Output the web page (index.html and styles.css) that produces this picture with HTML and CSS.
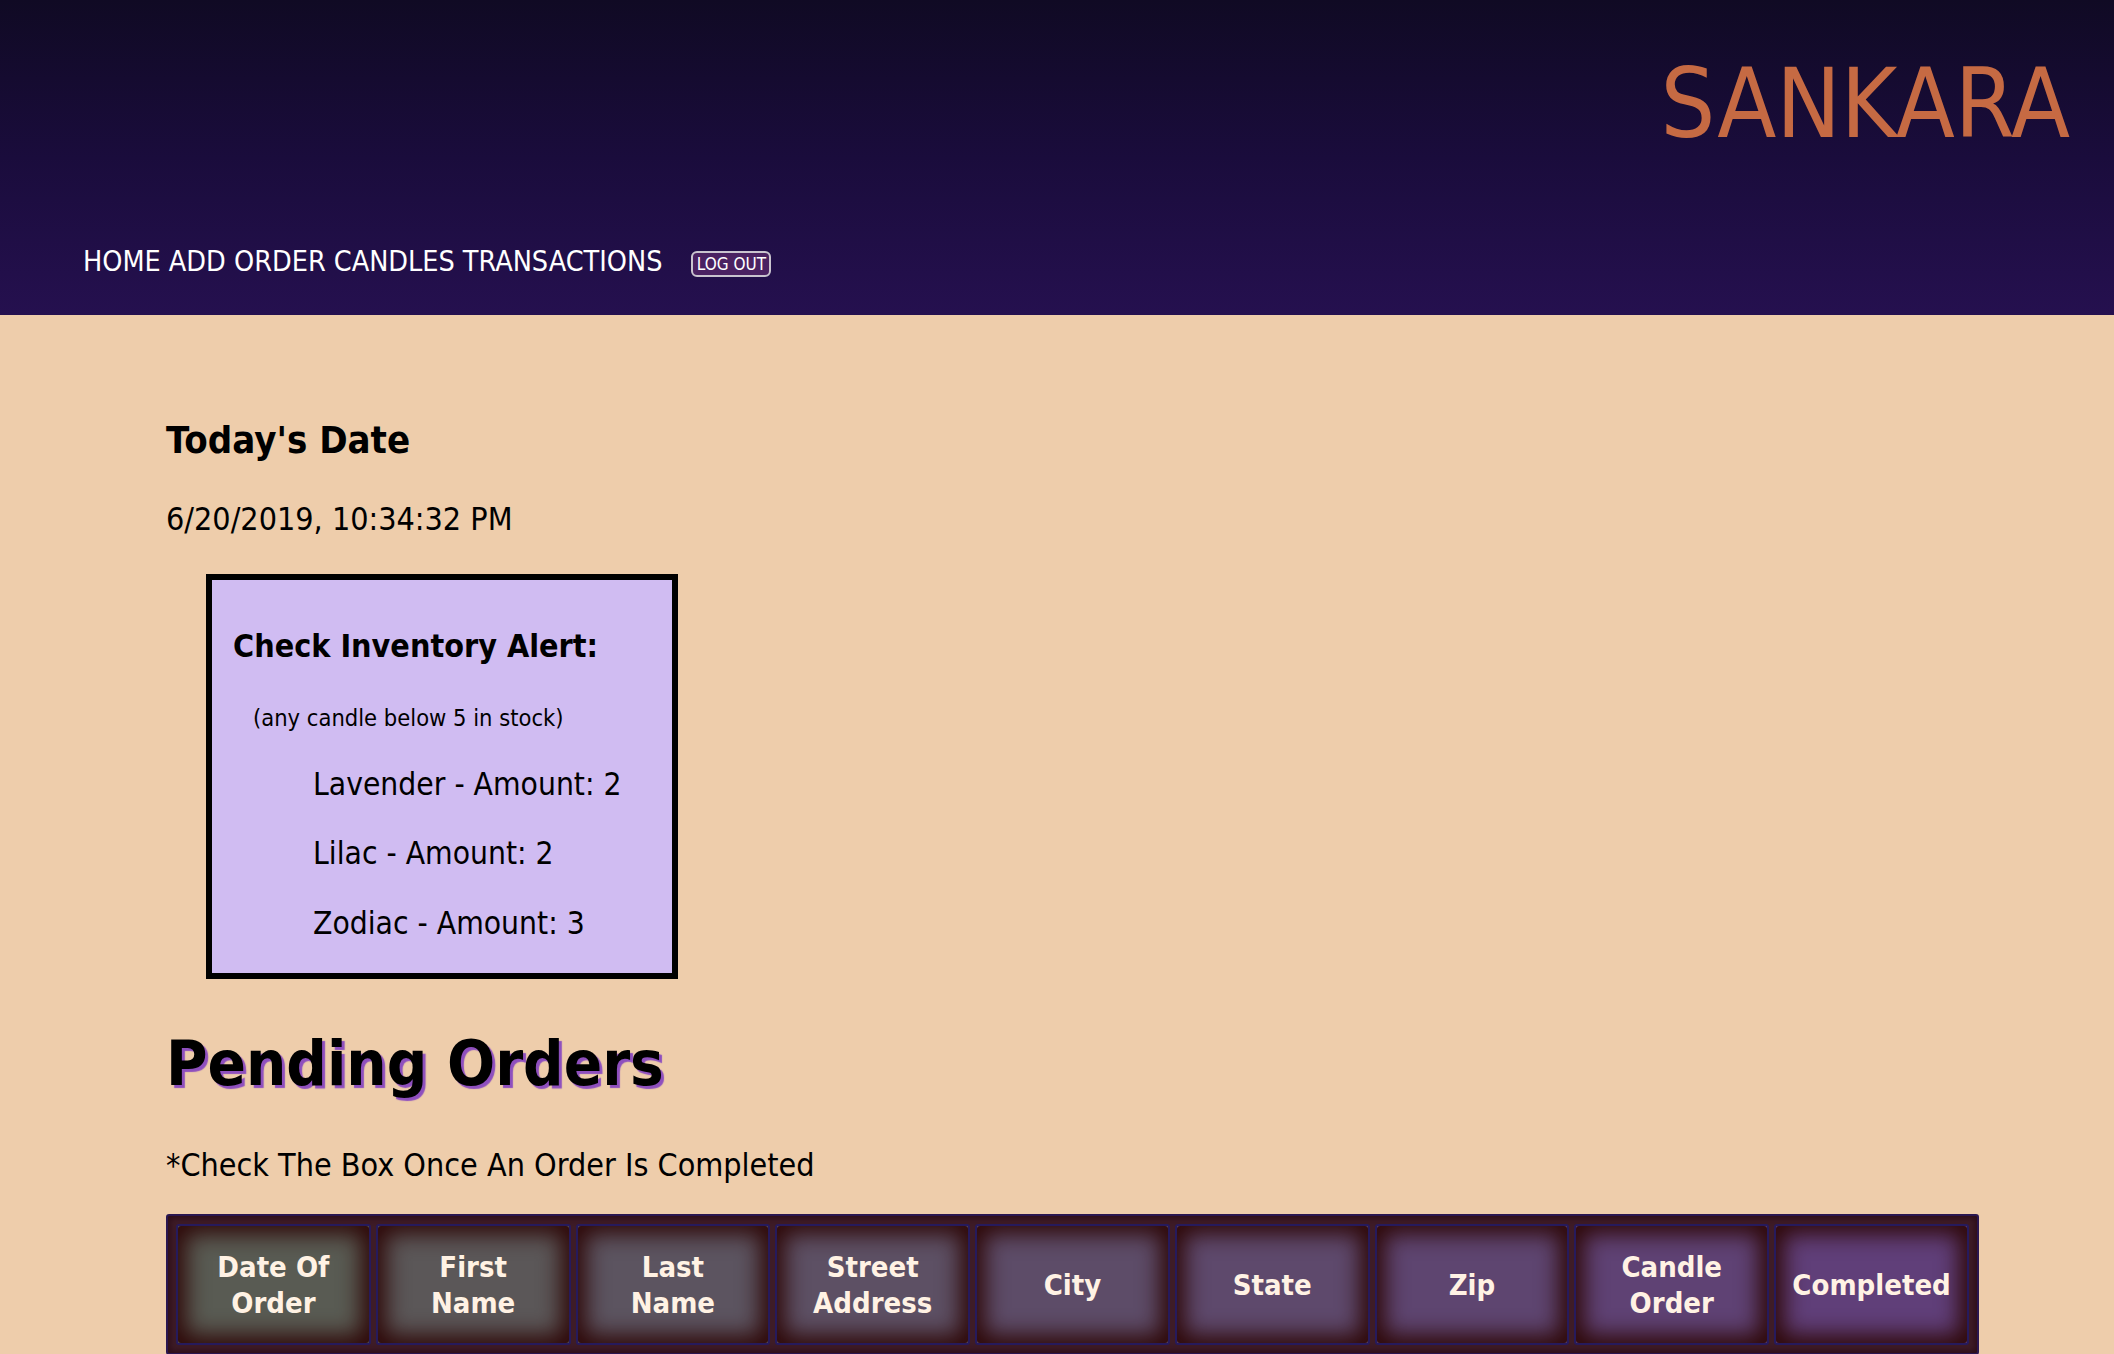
FILE: index.html
```html
<!DOCTYPE html>
<html lang="en">
<head>
<meta charset="utf-8">
<title>Sankara</title>
<link rel="stylesheet" href="styles.css">
</head>
<body>
<header class="site-header">
  <div class="brand">SANKARA</div>
  <nav class="nav">
    <a class="nav-link" href="#">HOME</a>
    <a class="nav-link" href="#">ADD ORDER</a>
    <a class="nav-link" href="#">CANDLES</a>
    <a class="nav-link" href="#">TRANSACTIONS</a>
    <button class="logout" type="button">LOG OUT</button>
  </nav>
</header>
<main class="main">
  <h3 class="date-title">Today's Date</h3>
  <p class="date-value">6/20/2019, 10:34:32 PM</p>
  <section class="alert">
    <h4 class="alert-title">Check Inventory Alert:</h4>
    <p class="alert-sub">(any candle below 5 in stock)</p>
    <p class="alert-item">Lavender - Amount: 2</p>
    <p class="alert-item">Lilac - Amount: 2</p>
    <p class="alert-item">Zodiac - Amount: 3</p>
  </section>
  <h1 class="pending-title">Pending Orders</h1>
  <p class="note">*Check The Box Once An Order Is Completed</p>
  <table class="orders">
    <thead>
      <tr>
        <th class="col c1">Date Of<br>Order</th>
        <th class="col c2">First<br>Name</th>
        <th class="col c3">Last<br>Name</th>
        <th class="col c4">Street<br>Address</th>
        <th class="col c5">City</th>
        <th class="col c6">State</th>
        <th class="col c7">Zip</th>
        <th class="col c8">Candle<br>Order</th>
        <th class="col c9">Completed</th>
      </tr>
    </thead>
  </table>
</main>
</body>
</html>
```
FILE: styles.css
```css
html, body {
  margin: 0;
  padding: 0;
}
body {
  background: #eecdab;
  font-family: "DejaVu Sans Condensed", "DejaVu Sans", Verdana, sans-serif;
  font-stretch: condensed;
  color: #000;
}
.site-header {
  height: 315px;
  box-sizing: border-box;
  background: linear-gradient(to bottom, #100a24 0%, #1a0c3c 50%, #25104f 100%);
  padding-top: 56px;
  display: flex;
  flex-direction: column;
}
.brand {
  align-self: flex-end;
  margin-right: 44px;
  color: #c66a43;
  font-size: 96px;
  line-height: 1;
  height: 96px;
}
.nav {
  margin-top: 96px;
  margin-left: 83px;
  display: flex;
  align-items: center;
  gap: 8px;
  height: 28px;
}
.nav-link {
  color: #fff;
  text-decoration: none;
  font-size: 28.5px;
  line-height: 1;
}
.logout {
  margin-left: 21px;
  margin-top: 4px;
  height: 26px;
  width: 80px;
  padding: 0;
  box-sizing: border-box;
  border: 2px solid #c9c4cf;
  border-radius: 6px;
  background: #4a2262;
  color: #fff;
  font-family: "DejaVu Sans Condensed", "DejaVu Sans", sans-serif;
  font-stretch: condensed;
  font-size: 17px;
  line-height: 1;
}
.main {
  padding-left: 166px;
  padding-top: 106px;
  padding-bottom: 40px;
}
.date-title {
  margin: 0;
  font-size: 38px;
  line-height: 1;
  font-weight: bold;
}
.date-value {
  margin: 44px 0 0;
  font-size: 32px;
  line-height: 1;
}
.alert {
  margin: 39px 0 0 40px;
  width: 472px;
  height: 405px;
  box-sizing: border-box;
  border: 6px solid #000;
  background: #d0bcf2;
  padding: 50px 0 0 21px;
}
.alert-title {
  margin: 0;
  font-size: 32px;
  line-height: 1;
  font-weight: bold;
}
.alert-sub {
  margin: 45px 0 0 20px;
  font-size: 23.5px;
  line-height: 1;
}
.alert-item {
  margin: 38px 0 0 80px;
  font-size: 31.5px;
  line-height: 1;
}
.pending-title {
  margin: 53px 0 0;
  font-size: 63px;
  line-height: 1;
  font-weight: bold;
  text-shadow: 3px 3px 1px #8e4fbe;
}
.note {
  margin: 54px 0 0;
  font-size: 32px;
  line-height: 1;
}
.orders {
  margin-top: 33px;
  width: 1813px;
  table-layout: fixed;
  border-collapse: separate;
  border-spacing: 5px;
  border: 2px solid #2a1650;
  border-radius: 3px;
  padding: 3px;
  background: #3e1c27;
  box-shadow: inset 0 0 6px 2px #2c0c18;
}
.col {
  height: 121px;
  box-sizing: border-box;
  border: 2px solid #261a5c;
  border-radius: 3px;
  padding: 0 4px;
  color: #fff2e4;
  font-size: 29px;
  line-height: 36px;
  font-weight: bold;
  text-align: center;
  vertical-align: middle;
  box-shadow: inset 0 0 22px 8px #2e0808;
}
.c1 { background: #595b53; }
.c2 { background: #5b5758; }
.c3 { background: #5c5460; }
.c4 { background: #5d5064; }
.c5 { background: #5d4c68; }
.c6 { background: #5e496c; }
.c7 { background: #5e4570; }
.c8 { background: #5f4274; }
.c9 { background: #603f79; }
```
